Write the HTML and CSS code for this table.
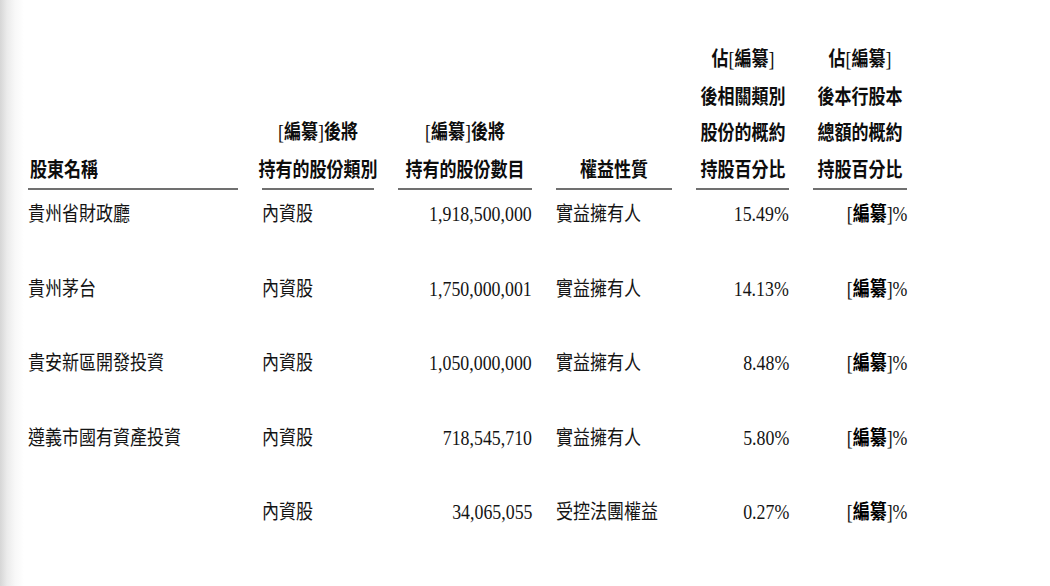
FILE: index.html
```html
<!DOCTYPE html>
<html lang="zh-Hant">
<head>
<meta charset="utf-8">
<title>股東持股</title>
<link rel="stylesheet" href="styles.css">
</head>
<body>
<div class="table">
  <div class="th left"><span class="sq">股東名稱</span></div>
  <div class="th"><span class="sq"><span class="bk">[</span>編纂<span class="bk">]</span>後將<br>持有的股份類別</span></div>
  <div class="th"><span class="sq"><span class="bk">[</span>編纂<span class="bk">]</span>後將<br>持有的股份數目</span></div>
  <div class="th"><span class="sq">權益性質</span></div>
  <div class="th"><span class="sq">佔<span class="bk">[</span>編纂<span class="bk">]</span><br>後相關類別<br>股份的概約<br>持股百分比</span></div>
  <div class="th"><span class="sq">佔<span class="bk">[</span>編纂<span class="bk">]</span><br>後本行股本<br>總額的概約<br>持股百分比</span></div>

  <div class="td"><span class="sq">貴州省財政廳</span></div>
  <div class="td"><span class="sq">內資股</span></div>
  <div class="td num"><span class="sq">1,918,500,000</span></div>
  <div class="td"><span class="sq">實益擁有人</span></div>
  <div class="td num"><span class="sq">15.49%</span></div>
  <div class="td num"><span class="sq">[<b class="red">編纂</b>]%</span></div>

  <div class="td"><span class="sq">貴州茅台</span></div>
  <div class="td"><span class="sq">內資股</span></div>
  <div class="td num"><span class="sq">1,750,000,001</span></div>
  <div class="td"><span class="sq">實益擁有人</span></div>
  <div class="td num"><span class="sq">14.13%</span></div>
  <div class="td num"><span class="sq">[<b class="red">編纂</b>]%</span></div>

  <div class="td"><span class="sq">貴安新區開發投資</span></div>
  <div class="td"><span class="sq">內資股</span></div>
  <div class="td num"><span class="sq">1,050,000,000</span></div>
  <div class="td"><span class="sq">實益擁有人</span></div>
  <div class="td num"><span class="sq">8.48%</span></div>
  <div class="td num"><span class="sq">[<b class="red">編纂</b>]%</span></div>

  <div class="td"><span class="sq">遵義市國有資產投資</span></div>
  <div class="td"><span class="sq">內資股</span></div>
  <div class="td num"><span class="sq">718,545,710</span></div>
  <div class="td"><span class="sq">實益擁有人</span></div>
  <div class="td num"><span class="sq">5.80%</span></div>
  <div class="td num"><span class="sq">[<b class="red">編纂</b>]%</span></div>

  <div class="td">&nbsp;</div>
  <div class="td"><span class="sq">內資股</span></div>
  <div class="td num"><span class="sq">34,065,055</span></div>
  <div class="td"><span class="sq">受控法團權益</span></div>
  <div class="td num"><span class="sq">0.27%</span></div>
  <div class="td num"><span class="sq">[<b class="red">編纂</b>]%</span></div>
</div>
</body>
</html>
```
FILE: styles.css
```css
html, body {
  margin: 0;
  padding: 0;
  height: 586px;
  overflow: hidden;
}
body {
  background: linear-gradient(to right, #d6d6d6 0px, #ebebeb 7px, #f8f8f8 15px, #ffffff 24px);
  color: #141414;
  font-family: "Noto Sans CJK TC", "Noto Sans CJK SC", sans-serif;
}
.table {
  display: grid;
  grid-template-columns: 210px 112px 134px 116px 93px 94px;
  column-gap: 24px;
  padding: 40px 0 0 28px;
}
.sq {
  display: inline-block;
  white-space: nowrap;
  transform: scaleX(0.85);
  transform-origin: 50% 50%;
}
.th {
  align-self: end;
  display: flex;
  justify-content: center;
  font-size: 20px;
  font-weight: 700;
  line-height: 36.6px;
  text-align: center;
  padding-bottom: 1px;
  border-bottom: 2px solid #707070;
  color: #0d0d0d;
}
.th.left {
  justify-content: flex-start;
  text-align: left;
  padding-left: 2px;
}
.th.left .sq {
  transform-origin: 0 50%;
}
.bk {
  font-family: "Liberation Serif", serif;
  font-weight: 400;
  font-size: 21px;
}
.td {
  align-self: baseline;
  font-size: 20px;
  font-weight: 400;
  line-height: 30px;
  padding: 8px 0 35.5px 0;
  white-space: nowrap;
}
.td .sq {
  transform-origin: 0 50%;
}
.td.num {
  font-family: "Liberation Serif", "Noto Sans CJK TC", serif;
  font-size: 21px;
  text-align: right;
}
.td.num .sq {
  transform-origin: 100% 50%;
}
.red {
  font-family: "Noto Sans CJK TC", sans-serif;
  font-weight: 700;
  font-size: 20px;
  color: #000;
}
```
